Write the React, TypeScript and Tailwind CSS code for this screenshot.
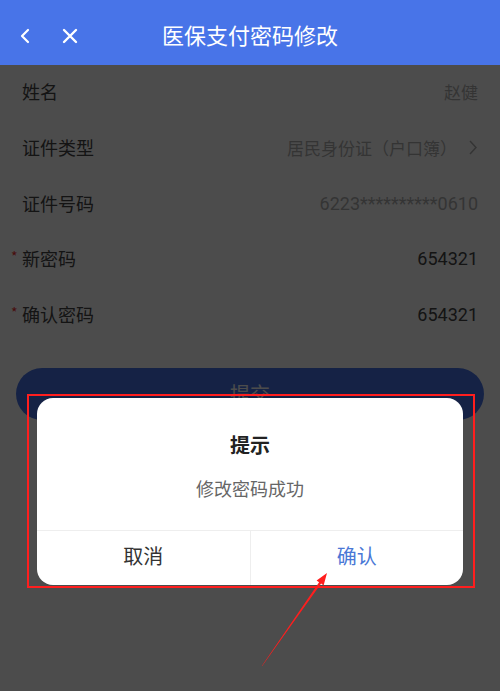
import React from 'react';

type Row = {
    label: string;
    value: string;
    required?: boolean;
    muted?: boolean;
    arrow?: boolean;
    digits?: boolean;
};

const rows: Row[] = [
    { label: '姓名', value: '赵健', muted: true },
    { label: '证件类型', value: '居民身份证（户口簿）', muted: true, arrow: true },
    { label: '证件号码', value: '6223**********0610', muted: true, digits: true },
    { label: '新密码', value: '654321', required: true, digits: true },
    { label: '确认密码', value: '654321', required: true, digits: true },
];

const App: React.FC = () => {
    return (
        <div className="relative w-[500px] h-[691px] overflow-hidden bg-white font-['Noto_Sans_CJK_SC','Noto_Sans',sans-serif]">
            {/* 顶部导航栏 */}
            <div className="h-[65px] bg-[#4874e8] grid grid-cols-[1fr_auto_1fr] items-center text-white pt-[6px]">
                <div className="flex items-center gap-[30px] pl-[18px]">
                    <svg width="14" height="16" viewBox="0 0 14 16" fill="none" stroke="white" strokeWidth="2.2" strokeLinecap="round" strokeLinejoin="round">
                        <path d="M10 2 L4 8 L10 14" />
                    </svg>
                    <svg width="16" height="16" viewBox="0 0 16 16" fill="none" stroke="white" strokeWidth="2.4" strokeLinecap="round">
                        <path d="M2 2 L14 14 M14 2 L2 14" />
                    </svg>
                </div>
                <h1 className="text-[22px] leading-[32px] -mt-[4px]">医保支付密码修改</h1>
                <div />
            </div>

            {/* 表单 */}
            <div className="px-[22px] -mt-px">
                {rows.map((row) => (
                    <div key={row.label} className="h-[55.7px] flex items-center justify-between text-[18px]">
                        <span className="relative text-[#444]">
                            {row.required && (
                                <span className="absolute left-[-11px] top-[1px] text-[14px] text-[#f03030]">*</span>
                            )}
                            {row.label}
                        </span>
                        <span
                            className={`flex items-center ${row.digits ? "text-[18px] font-['Roboto',sans-serif]" : 'text-[17px]'} ${row.muted ? 'text-[#b0b0b0]' : 'text-[#444]'}`}
                        >
                            {row.value}
                            {row.arrow && (
                                <svg className="ml-[12px] mr-[1px]" width="8" height="15" viewBox="0 0 8 15" fill="none" stroke="#b0b0b0" strokeWidth="1.5">
                                    <path d="M1 1 L7 7.5 L1 14" />
                                </svg>
                            )}
                        </span>
                    </div>
                ))}
            </div>

            <div className="px-4 mt-[25.5px]">
                <button className="w-full h-[52px] rounded-full bg-[#4874e8] text-white text-[20px]">提交</button>
            </div>

            {/* 遮罩与弹窗 */}
            <div className="absolute inset-x-0 top-[65px] bottom-0 bg-black/70 pt-[329px] pl-[27px] pr-[25px]">
                <div className="border-2 border-[#ff1e1e] pl-[8px] pr-[10px] pt-[2px] pb-[1px]">
                    <div className="bg-white rounded-[16px] overflow-hidden">
                        <div className="pt-[32px] pb-[28px] text-center">
                            <div className="text-[20px] leading-[30px] font-bold text-[#222]">提示</div>
                            <div className="mt-[14px] text-[18px] leading-[28px] text-[#666]">修改密码成功</div>
                        </div>
                        <div className="flex h-[55px] border-t border-[#eeeeee] text-[20px]">
                            <button className="flex-1 text-[#333] border-r border-[#eeeeee] pb-[4px]">取消</button>
                            <button className="flex-1 text-[#4a78d6] pb-[4px]">确认</button>
                        </div>
                    </div>
                </div>
            </div>

            {/* 箭头标注 */}
            <svg className="absolute left-0 top-0" width="500" height="691" viewBox="0 0 500 691">
                <polygon
                    fill="#ff1e1e"
                    points="261.8,665.9 319.1,582.2 316.6,580.4 327,573 323.6,585.4 321.1,583.6 262.2,666.1"
                />
            </svg>
        </div>
    );
};

export default App;
